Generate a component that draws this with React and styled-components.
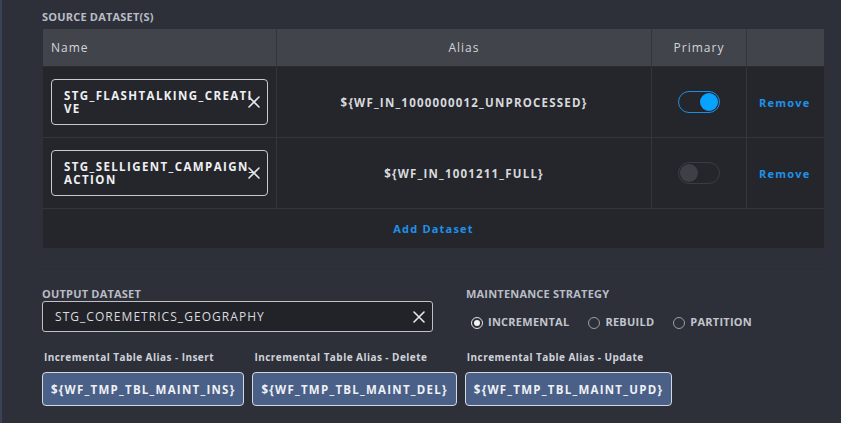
import { createGlobalStyle } from "styled-components";
import styled from "styled-components";

const GlobalStyle = createGlobalStyle`
  html, body {
    margin: 0;
    padding: 0;
    background: #2e3039;
  }
  body {
    font-family: "Open Sans", "Liberation Sans", sans-serif;
    -webkit-font-smoothing: antialiased;
  }
  * {
    box-sizing: border-box;
  }
`;

const Page = styled.main`
  width: 841px;
  height: 423px;
  overflow: hidden;
  background: #2e3039;
  border-left: 2px solid #3a4257;
  padding: 10px 17px 0 40px;
`;

const SectionLabel = styled.div`
  font-size: 11px;
  line-height: 14px;
  font-weight: 700;
  letter-spacing: 0.2px;
  color: #b9bdc6;
  text-transform: uppercase;
  margin-bottom: ${(p) => p.$gap || 0}px;
`;

const Table = styled.div`
  width: 781px;
  margin-left: 1px;
  background: #25262b;
  border-radius: 0 0 2px 2px;
`;

const Row = styled.div`
  display: grid;
  grid-template-columns: 233px 375px 95px 78px;
  height: ${(p) => (p.$head ? 38 : 71)}px;
  background: ${(p) => (p.$head ? "#42444c" : "#25262b")};
  border-bottom: 1px solid ${(p) => (p.$head ? "#2b2c32" : "#34363c")};
`;

const Cell = styled.div`
  display: flex;
  align-items: center;
  justify-content: ${(p) => p.$align || "flex-start"};
  padding-left: ${(p) => p.$pad || 0}px;
  border-left: ${(p) => (p.$first ? "none" : "1px solid")};
  border-color: ${(p) => (p.$head ? "#33353c" : "#34363c")};
`;

const HeadText = styled.span`
  font-size: 12px;
  font-weight: 400;
  letter-spacing: 1px;
  color: #d3d5da;
`;

const NameBox = styled.div`
  position: relative;
  width: 217px;
  height: 46px;
  margin-left: 8px;
  border: 1px solid #c9cacd;
  border-radius: 4px;
  display: flex;
  align-items: center;
  padding-left: 12px;
`;

const NameText = styled.span`
  width: 192.5px;
  word-break: break-all;
  font-size: 11.5px;
  line-height: 13px;
  font-weight: 700;
  letter-spacing: 1.4px;
  color: #eef0f3;
`;

const ClearButton = styled.span`
  position: absolute;
  right: ${(p) => p.$right || 7}px;
  top: 50%;
  transform: translateY(-50%);
  width: 12px;
  height: 12px;
  display: flex;
`;

const AliasValue = styled.span`
  font-size: 11.5px;
  font-weight: 700;
  letter-spacing: 1.2px;
  color: #d7d9dd;
`;

const Toggle = styled.span`
  position: relative;
  width: 42px;
  height: 22px;
  border-radius: 11px;
  border: 1px solid ${(p) => (p.$on ? "#1b8fe0" : "#3a3c44")};
  &::after {
    content: "";
    position: absolute;
    top: 1px;
    left: ${(p) => (p.$on ? "21px" : "1px")};
    width: 18px;
    height: 18px;
    border-radius: 50%;
    background: ${(p) => (p.$on ? "#08a2ff" : "#3e4048")};
  }
`;

const LinkText = styled.span`
  font-size: 11px;
  font-weight: 700;
  letter-spacing: 1.2px;
  color: #1e92ea;
  cursor: pointer;
`;

const AddRow = styled.div`
  height: 39px;
  display: flex;
  align-items: center;
  justify-content: center;
`;

const Divider = styled.div`
  height: 1px;
  margin: 21px 0 17px;
  background: #2b2d35;
`;

const OutputGrid = styled.div`
  display: grid;
  grid-template-columns: 391px 1fr;
  column-gap: 33px;
`;

const OutputBox = styled.div`
  position: relative;
  height: 31px;
  background: #222329;
  border: 1px solid #bfc1c6;
  border-radius: 3px;
  display: flex;
  align-items: center;
  padding-left: 12px;
  font-size: 12px;
  letter-spacing: 1.05px;
  color: #d9dbdf;
`;

const RadioRow = styled.div`
  display: flex;
  align-items: center;
  gap: 19px;
  margin-top: 13px;
  padding-left: 5px;
`;

const RadioItem = styled.label`
  display: flex;
  align-items: center;
  gap: 5px;
  font-size: 11px;
  font-weight: 700;
  letter-spacing: 0.25px;
  color: #c1c5cd;
`;

const RadioDot = styled.span`
  width: 12px;
  height: 12px;
  border-radius: 50%;
  transform: translateY(1px);
  border: ${(p) => (p.$checked ? "1.5px solid #e2e3e6" : "1px solid #9a9ea7")};
  display: flex;
  align-items: center;
  justify-content: center;
  &::after {
    content: "";
    display: ${(p) => (p.$checked ? "block" : "none")};
    width: 6px;
    height: 6px;
    border-radius: 50%;
    background: #f2f3f5;
  }
`;

const AliasRow = styled.div`
  display: flex;
  gap: 8px;
  margin-top: 19px;
`;

const AliasGroup = styled.div`
  display: flex;
  flex-direction: column;
`;

const SmallLabel = styled.span`
  font-size: 10px;
  line-height: 12px;
  font-weight: 700;
  letter-spacing: 0.45px;
  color: #cfd3d9;
  margin: 0 0 9px 2px;
`;

const AliasBox = styled.div`
  height: 34px;
  padding: 0 8px;
  display: flex;
  align-items: center;
  background: #4b6087;
  border: 1px solid #d3d8e1;
  border-radius: 4px;
  font-size: 11.5px;
  font-weight: 700;
  letter-spacing: 1.25px;
  color: #eef1f6;
`;

const CloseIcon = () => (
  <svg width="12" height="12" viewBox="0 0 12 12">
    <path d="M1 1L11 11M11 1L1 11" stroke="#e6e7ea" strokeWidth="1.6" strokeLinecap="round" />
  </svg>
);

const sources = [
  { name: "STG_FLASHTALKING_CREATIVE", alias: "${WF_IN_1000000012_UNPROCESSED}", primary: true },
  { name: "STG_SELLIGENT_CAMPAIGN_ACTION", alias: "${WF_IN_1001211_FULL}", primary: false },
];

const strategies = ["INCREMENTAL", "REBUILD", "PARTITION"];

const aliases = [
  { label: "Incremental Table Alias - Insert", value: "${WF_TMP_TBL_MAINT_INS}" },
  { label: "Incremental Table Alias - Delete", value: "${WF_TMP_TBL_MAINT_DEL}" },
  { label: "Incremental Table Alias - Update", value: "${WF_TMP_TBL_MAINT_UPD}" },
];

function App() {
  return (
    <>
      <GlobalStyle />
      <Page>
        <SectionLabel $gap={5}>Source Dataset(s)</SectionLabel>
        <Table>
          <Row $head>
            <Cell $first $head $pad={8}>
              <HeadText>Name</HeadText>
            </Cell>
            <Cell $head $align="center">
              <HeadText>Alias</HeadText>
            </Cell>
            <Cell $head $align="center">
              <HeadText>Primary</HeadText>
            </Cell>
            <Cell $head />
          </Row>
          {sources.map((s) => (
            <Row key={s.name}>
              <Cell $first>
                <NameBox>
                  <NameText>{s.name}</NameText>
                  <ClearButton>
                    <CloseIcon />
                  </ClearButton>
                </NameBox>
              </Cell>
              <Cell $align="center">
                <AliasValue>{s.alias}</AliasValue>
              </Cell>
              <Cell $align="center">
                <Toggle $on={s.primary} />
              </Cell>
              <Cell $pad={12}>
                <LinkText>Remove</LinkText>
              </Cell>
            </Row>
          ))}
          <AddRow>
            <LinkText>Add Dataset</LinkText>
          </AddRow>
        </Table>

        <Divider />

        <OutputGrid>
          <div>
            <SectionLabel>Output Dataset</SectionLabel>
            <OutputBox>
              STG_COREMETRICS_GEOGRAPHY
              <ClearButton $right={7}>
                <CloseIcon />
              </ClearButton>
            </OutputBox>
          </div>
          <div>
            <SectionLabel>Maintenance Strategy</SectionLabel>
            <RadioRow>
              {strategies.map((s, i) => (
                <RadioItem key={s}>
                  <RadioDot $checked={i === 0} />
                  {s}
                </RadioItem>
              ))}
            </RadioRow>
          </div>
        </OutputGrid>

        <AliasRow>
          {aliases.map((a) => (
            <AliasGroup key={a.label}>
              <SmallLabel>{a.label}</SmallLabel>
              <AliasBox>{a.value}</AliasBox>
            </AliasGroup>
          ))}
        </AliasRow>
      </Page>
    </>
  );
}

export default App;
